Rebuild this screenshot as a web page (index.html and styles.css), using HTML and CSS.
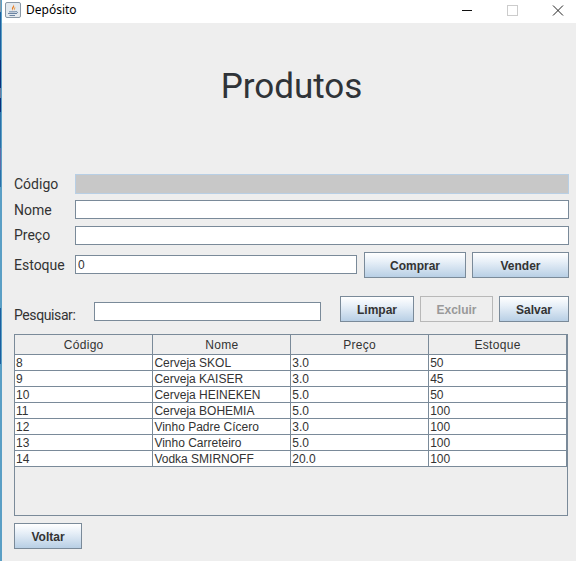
FILE: index.html
```html
<!DOCTYPE html>
<html lang="pt-BR">

<head>
    <meta charset="UTF-8">
    <title>Depósito</title>
    <link rel="stylesheet" href="styles.css">
</head>

<body>
    <div class="desktop-edge"></div>
    <div class="window">
        <div class="titlebar">
            <svg class="app-icon" width="16" height="16" viewBox="0 0 16 16">
                <rect x="0.5" y="0.5" width="15" height="15" rx="1.5" fill="#e4e9ee" stroke="#8a98a6"/>
                <path d="M8.5 2C9.5 4 6.5 5 7 7C7.2 8 8 8.5 8 8.5C7 6.5 10.5 5.5 8.5 2Z" fill="#e8791e"/>
                <path d="M10 4.5C9.5 6 8.5 6.5 9 8.5C9.8 7.5 10.8 6 10 4.5Z" fill="#e8a050"/>
                <path d="M4 9.5H10.5V10.3H4ZM3 11.3H11.5V12H3ZM4.5 13H10V13.7H4.5Z" fill="#44648a"/>
                <path d="M10.5 9.5C13 9.3 13 11.5 10.8 11.5" fill="none" stroke="#44648a" stroke-width="0.8"/>
            </svg>
            <span class="window-title">Depósito</span>
            <div class="controls">
                <svg width="136" height="16" viewBox="0 0 136 16">
                    <path d="M22 5.5H32" stroke="#111" fill="none"/>
                    <rect x="67.5" y="0.5" width="10" height="10" stroke="#ccc" fill="none"/>
                    <path d="M113 0.5L123 10.5M123 0.5L113 10.5" stroke="#222" fill="none"/>
                </svg>
            </div>
        </div>

        <div class="content">
            <h1>Produtos</h1>

            <div class="row row-codigo">
                <label>Código</label>
                <input type="text" class="field field-off" disabled>
            </div>
            <div class="row row-nome">
                <label>Nome</label>
                <input type="text" class="field">
            </div>
            <div class="row row-preco">
                <label>Preço</label>
                <input type="text" class="field">
            </div>
            <div class="row row-estoque">
                <label>Estoque</label>
                <input type="text" class="field field-qtd" value="0">
                <button class="btn btn-comprar">Comprar</button>
                <button class="btn btn-vender">Vender</button>
            </div>
            <div class="row row-busca">
                <label class="label-busca">Pesquisar:</label>
                <input type="text" class="field field-busca">
                <button class="btn btn-limpar">Limpar</button>
                <button class="btn btn-excluir" disabled>Excluir</button>
                <button class="btn btn-salvar">Salvar</button>
            </div>

            <div class="table-pane">
                <table>
                    <thead>
                        <tr><th>Código</th><th>Nome</th><th>Preço</th><th>Estoque</th></tr>
                    </thead>
                    <tbody>
                        <tr><td>8</td><td>Cerveja SKOL</td><td>3.0</td><td>50</td></tr>
                        <tr><td>9</td><td>Cerveja KAISER</td><td>3.0</td><td>45</td></tr>
                        <tr><td>10</td><td>Cerveja HEINEKEN</td><td>5.0</td><td>50</td></tr>
                        <tr><td>11</td><td>Cerveja BOHEMIA</td><td>5.0</td><td>100</td></tr>
                        <tr><td>12</td><td>Vinho Padre Cícero</td><td>3.0</td><td>100</td></tr>
                        <tr><td>13</td><td>Vinho Carreteiro</td><td>5.0</td><td>100</td></tr>
                        <tr><td>14</td><td>Vodka SMIRNOFF</td><td>20.0</td><td>100</td></tr>
                    </tbody>
                </table>
            </div>

            <button class="btn btn-voltar">Voltar</button>
        </div>
    </div>
</body>

</html>
```

FILE: styles.css
```css
html,
body {
    height: 100%;
}

body {
    margin: 0;
    display: flex;
    overflow: hidden;
    background-color: #eeeeee;
    font-family: Roboto, sans-serif;
    color: #333333;
}

.desktop-edge {
    width: 2px;
    flex-shrink: 0;
    background-color: #5a9fc5;
    background-image: linear-gradient(to bottom,
        #8a9aa6 0, #8a9aa6 12px,
        #1c5f9e 12px, #1c5f9e 60px,
        #0a2f7a 60px, #0a2f7a 88px,
        #6a7a9e 88px, #6a7a9e 98px,
        #0a2f7a 98px, #0a2f7a 112px,
        #2a70a8 112px, #2a70a8 148px,
        #5f6aa8 148px, #5f6aa8 170px,
        #2a70a8 170px, #2a70a8 187px,
        #5a9fc5 187px, #5a9fc5 308px,
        #1c5f9e 308px, #1c5f9e 364px,
        #5a9fc5 364px);
    background-size: 1px 100%;
    background-repeat: no-repeat;
}

.window {
    flex: 1;
    min-width: 0;
}

.titlebar {
    height: 23px;
    background-color: #ffffff;
    display: flex;
    align-items: flex-start;
    padding: 2px 0 0 3px;
    box-sizing: border-box;
    font-family: "Noto Sans", sans-serif;
}

.app-icon {
    flex-shrink: 0;
}

.window-title {
    margin-left: 5px;
    font-size: 12px;
    line-height: 15px;
    color: #000000;
}

.controls {
    margin-left: auto;
    padding-top: 3px;
    line-height: 0;
}

.content {
    padding: 0 7px 0 12px;
}

h1 {
    margin: 0;
    height: 127px;
    padding-top: 40px;
    box-sizing: border-box;
    text-align: center;
    font-size: 35px;
    line-height: 48px;
    font-weight: normal;
    color: #2f3338;
}

.row {
    display: flex;
    align-items: flex-start;
}

.row label {
    width: 61px;
    flex-shrink: 0;
    font-size: 14px;
    line-height: 20px;
}

.row-codigo {
    margin-top: 24px;
}

.row-nome {
    margin-top: 6px;
}

.row-preco {
    height: 20px;
    margin-top: 6px;
}

.row-preco label {
    line-height: 18px;
}

.row-estoque {
    margin-top: 6px;
}

.row-busca {
    height: 26px;
    margin-top: 18px;
}

.field {
    flex: 1;
    min-width: 0;
    height: 19px;
    margin: 0;
    padding: 0 2px;
    box-sizing: border-box;
    border: 1px solid #7a8a99;
    border-radius: 0;
    background-color: #ffffff;
    font-family: "Liberation Sans", Arial, sans-serif;
    font-size: 12px;
    color: #333333;
    outline: none;
}

.field-off {
    height: 20px;
    background-color: #c8c8c8;
    border-color: #b8cfe5;
}

.field-qtd {
    flex: none;
    width: 282px;
    margin-top: 3px;
}

.row-estoque label {
    margin-top: 3px;
}

.row .label-busca {
    width: 80px;
    margin-top: 8px;
    line-height: 22px;
    letter-spacing: -0.4px;
}

.field-busca {
    flex: none;
    width: 227px;
    margin-top: 6px;
}

.btn {
    height: 26px;
    padding: 1px 0 0;
    box-sizing: border-box;
    border: 1px solid #7a8a99;
    border-radius: 0;
    background: linear-gradient(to bottom, #ffffff 0%, #e8f0f8 35%, #b8cfe5 100%);
    font-family: "Liberation Sans", Arial, sans-serif;
    font-size: 12px;
    font-weight: bold;
    color: #333333;
    cursor: pointer;
}

.btn-comprar {
    width: 102px;
    margin-left: 7px;
}

.btn-vender {
    width: 97px;
    margin-left: 6px;
}

.btn-limpar {
    width: 74px;
    margin-left: 19px;
}

.btn-excluir {
    width: 73px;
    margin-left: 6px;
    background: #eeeeee;
    border-color: #b8b8b8;
    color: #999999;
}

.btn-salvar {
    width: 70px;
    margin-left: 6px;
}

.table-pane {
    height: 182px;
    margin-top: 12px;
    margin-right: 1px;
    box-sizing: border-box;
    border: 1px solid #7a8a99;
}

table {
    width: 552px;
    border-collapse: collapse;
    table-layout: fixed;
    font-family: "Liberation Sans", Arial, sans-serif;
    font-size: 12px;
}

th {
    height: 19px;
    padding: 1px 0 0;
    box-sizing: border-box;
    font-weight: normal;
    letter-spacing: 0.3px;
    background-color: #eeeeee;
    border-right: 1px solid #7a8a99;
    border-bottom: 1px solid #7a8a99;
}

td {
    height: 16px;
    box-sizing: border-box;
    padding: 1px 1px 0;
    line-height: 14px;
    background-color: #ffffff;
    border-right: 1px solid #7a8a99;
    border-bottom: 1px solid #7a8a99;
    overflow: hidden;
    white-space: nowrap;
}

.btn-voltar {
    display: block;
    width: 68px;
    margin-top: 7px;
}
```
